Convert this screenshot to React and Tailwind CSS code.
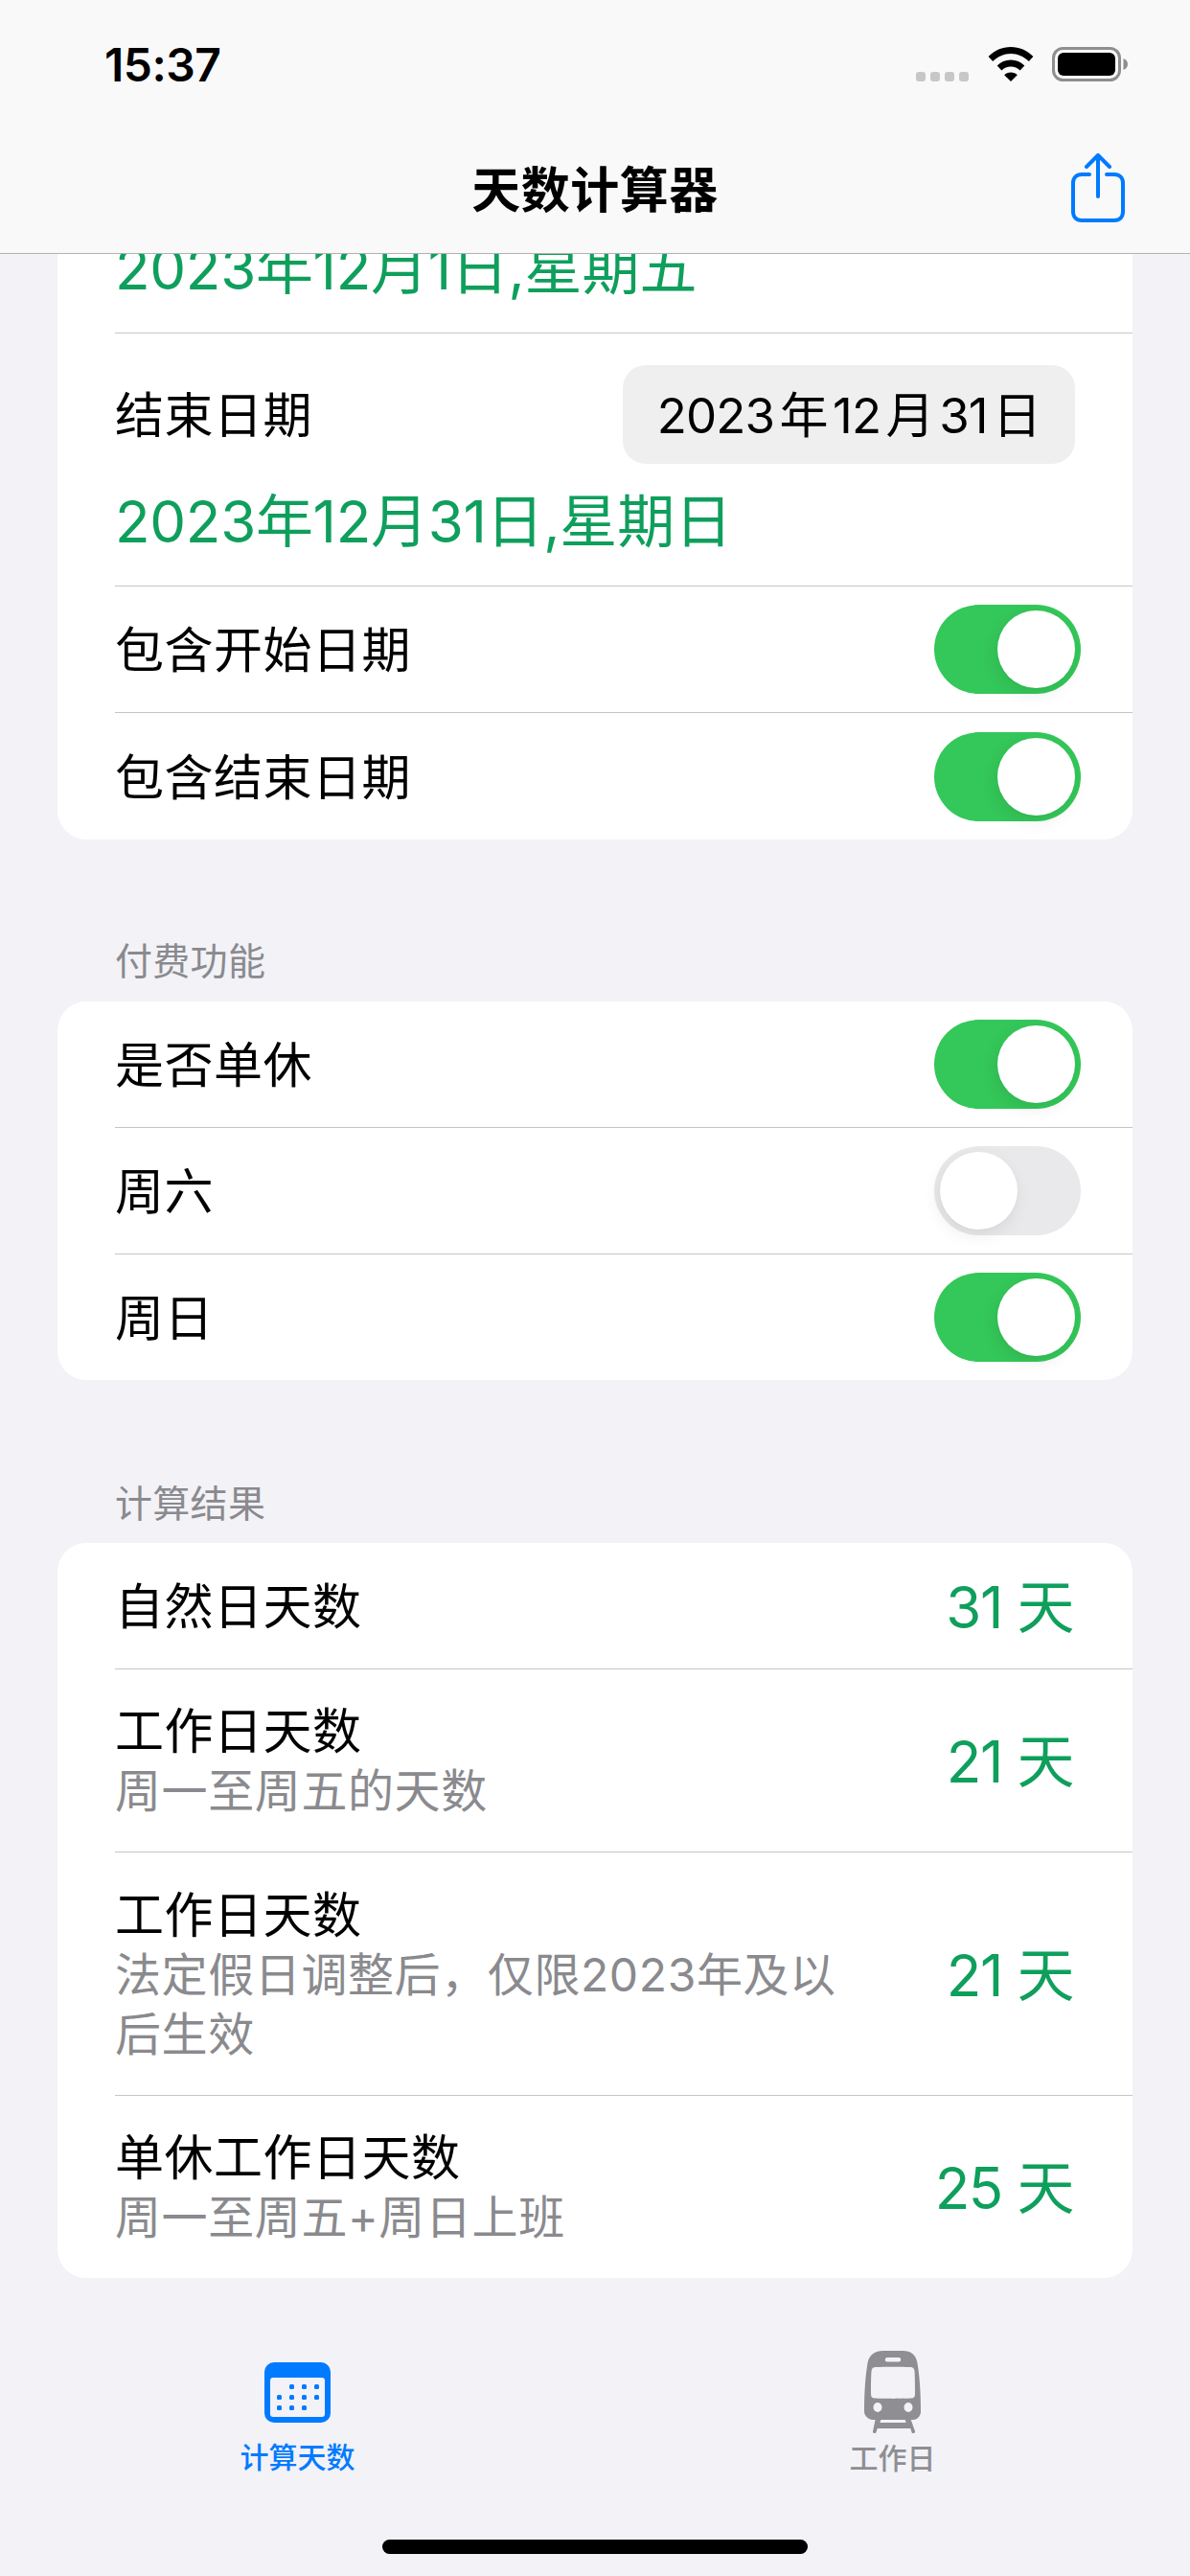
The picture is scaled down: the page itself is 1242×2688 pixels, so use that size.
const FONT = "font-['Inter','Noto_Sans_CJK_SC',sans-serif]";

function Toggle({ on = true }) {
  return (
    <div className={`flex h-[93px] w-[153px] shrink-0 items-center rounded-full p-[6px] ${on ? "justify-end bg-[#34c759]" : "justify-start bg-[#e9e9eb]"}`}>
      <div className="h-[81px] w-[81px] rounded-full bg-white shadow-[-2px_6px_18px_rgba(0,0,0,0.08),0_1px_2px_rgba(0,0,0,0.04)]" />
    </div>
  );
}

function Separator() {
  return <div className="ml-[60px] h-px bg-[#c6c6c8]" />;
}

function ToggleRow({ label, on, h = "h-[131px]" }) {
  return (
    <div className={`flex items-center justify-between pl-[60px] pr-[54px] ${h}`}>
      <span className="pt-[3px] text-[51px] leading-[60px] tracking-[0.5px] text-black">{label}</span>
      <Toggle on={on} />
    </div>
  );
}

function ResultRow({ title, sub, value, h }) {
  return (
    <div className={`flex items-center justify-between pl-[60px] pr-[62px] ${h}`}>
      <div className="flex w-[770px] flex-col pt-[2px]">
        <span className="text-[51px] leading-[62px] tracking-[0.5px] text-black">{title}</span>
        {sub && <span className="text-[48px] leading-[62px] tracking-[0.6px] text-[#8a8a8e]">{sub}</span>}
      </div>
      <span className="whitespace-nowrap pt-[2px] text-[60px] leading-[70px] tracking-[-1.4px] text-[#0f9f5c]">{value}</span>
    </div>
  );
}

function SectionLabel({ children }) {
  return <div className="pl-[60px] pt-[1px] text-[39px] leading-[46px] tracking-[0.3px] text-[#8a8a8e]">{children}</div>;
}

function Wifi() {
  return (
    <svg width="48" height="36" viewBox="0 0 48 36" className="block">
      <path d="M24 0C15 0 7 3.6 0.6 10l4.6 5C10.300 10 16.800 7 24 7s13.700 3 18.800 8l4.600-5C41 3.600 33 0 24 0z" fill="#000" />
      <path d="M24 13.500c-5.600 0-10.600 2.200-14.300 5.900l4.700 5c2.500-2.400 5.900-3.900 9.600-3.900s7.100 1.500 9.600 3.900l4.700-5C34.600 15.700 29.600 13.500 24 13.500z" fill="#000" />
      <path d="M24 26.500c-2.700 0-5 1-6.800 2.700L24 36l6.800-6.800C29 27.500 26.700 26.500 24 26.500z" fill="#000" />
    </svg>
  );
}

function Battery() {
  return (
    <svg width="80" height="36" viewBox="0 0 80 36" className="block">
      <rect x="1.500" y="1.500" width="69" height="33" rx="10" fill="none" stroke="#8e8e90" strokeWidth="3" />
      <rect x="6" y="6" width="60" height="24" rx="6" fill="#000" />
      <path d="M74.500 12c2.700 1 4.500 3.300 4.500 6s-1.800 5-4.500 6z" fill="#8e8e90" />
    </svg>
  );
}

function Share() {
  return (
    <svg width="56" height="72" viewBox="0 0 56 72" fill="none" stroke="#007aff" strokeWidth="4" strokeLinecap="round" strokeLinejoin="round" className="block">
      <path d="M19 22H11C5.500 22 2 25.500 2 31v30c0 5.500 3.500 9 9 9h34c5.500 0 9-3.500 9-9V31c0-5.500-3.500-9-9-9h-8" />
      <path d="M28 45V3" />
      <path d="M16 14L28 2l12 12" />
    </svg>
  );
}

function CalendarIcon() {
  const all = [
    [15, 0], [28, 0], [41, 0],
    [2, 11], [15, 11], [28, 11], [41, 11],
    [2, 22], [15, 22], [28, 22],
  ];
  return (
    <svg width="69" height="63" viewBox="0 0 69 63" className="block">
      <rect width="69" height="63" rx="10" fill="#007aff" />
      <rect x="6" y="16" width="57" height="41" rx="3" fill="#f2f2f7" />
      {all.map(([x, y], i) => (
        <rect key={i} x={11 + x} y={23 + y} width="5" height="5" rx="1.500" fill="#007aff" />
      ))}
    </svg>
  );
}

function TrainIcon() {
  return (
    <svg width="60" height="86" viewBox="0 0 60 86" className="block">
      <path fillRule="evenodd" fill="#8e8e93" d="M20 0h20c9 0 14 4 15.500 13 2 12 3.500 28 3.500 50 0 5-3 8-7 9H8c-4-1-8-4-8-9 0-22 1.500-38 3.500-50C5 4 11 0 20 0zM24 7a2 2 0 0 0 0 4.500h12a2 2 0 0 0 0-4.500zM12 17c-3 0-4 1.500-4.500 4-.5 6-.5 16-.500 24 0 3 1 4.500 4 4.500 6 .5 32 .5 38 0 3 0 4-1.500 4-4.500 0-8 0-18-.5-24-.5-2.500-1.500-4-4.500-4-6-.5-30-.5-36 0zM14 54a4.500 5 0 1 0 0 10 4.500 5 0 0 0 0-10zM46 54a4.500 5 0 1 0 0 10 4.500 5 0 0 0 0-10z" />
      <path fill="#8e8e93" d="M12 70h6l-1.700 5h27.400l-1.700-5h6l5 14c.5 2-2.500 3-3.500 1l-1.200-4H13.700l-1.200 4c-1 2-4 1-3.500-1z" />
    </svg>
  );
}

export default function App() {
  return (
    <div className={`flex h-[2688px] w-[1242px] flex-col overflow-hidden bg-[#f2f2f7] ${FONT}`}>
      <header className="flex h-[265px] shrink-0 flex-col border-b border-[#b2b2b2] bg-[#f9f9fa]">
        <div className="flex h-[134px] items-start justify-between pl-[109px] pr-[64px] pt-[39px]">
          <span className="text-[48px] font-semibold leading-[58px] tracking-[-0.5px] text-black">15:37</span>
          <div className="flex items-start pt-[10px]">
            <div className="mr-[20px] mt-[26px] flex gap-[5px]">
              <div className="h-[10px] w-[10px] rounded-[3px] bg-[#c7c7c9]" />
              <div className="h-[10px] w-[10px] rounded-[3px] bg-[#c7c7c9]" />
              <div className="h-[10px] w-[10px] rounded-[3px] bg-[#c7c7c9]" />
              <div className="h-[10px] w-[10px] rounded-[3px] bg-[#c7c7c9]" />
            </div>
            <Wifi />
            <div className="ml-[19px]"><Battery /></div>
          </div>
        </div>
        <div className="relative flex h-[130px] items-start justify-center pt-[33px]">
          <span className="text-[51px] font-semibold leading-[64px] tracking-[0.5px] text-black">天数计算器</span>
          <div className="absolute right-[68px] top-[26px]"><Share /></div>
        </div>
      </header>

      <main className="flex flex-1 flex-col px-[60px]">
        <section className="rounded-b-[30px] bg-white">
          <div className="h-[82px] overflow-hidden pl-[60px]">
            <div className="-mt-[15px] text-[60px] leading-[60px] text-[#0f9f5c]"><span className="tracking-[-0.3px]">2023年12月1日,</span>星期五</div>
          </div>
          <Separator />
          <div className="flex h-[263px] flex-col pl-[60px] pr-[60px] pt-[33px]">
            <div className="flex h-[103px] items-center justify-between">
              <span className="pt-[2px] text-[51px] leading-[60px] tracking-[0.5px] text-black">结束日期</span>
              <div className="flex h-[103px] w-[472px] items-center justify-center rounded-[24px] bg-[#efeff0] pt-[2px] text-[51px] leading-[60px] tracking-[-0.9px] [word-spacing:-8px] text-black">2023 年 12 月 31 日</div>
            </div>
            <div className="mt-[30px] text-[60px] leading-[60px] text-[#0f9f5c]"><span className="tracking-[-0.3px]">2023年12月31日,</span>星期日</div>
          </div>
          <Separator />
          <ToggleRow label="包含开始日期" on />
          <Separator />
          <ToggleRow label="包含结束日期" on h="h-[132px]" />
        </section>

        <div className="mt-[103px]"><SectionLabel>付费功能</SectionLabel></div>
        <section className="mt-[19px] rounded-[30px] bg-white">
          <ToggleRow label="是否单休" on />
          <Separator />
          <ToggleRow label="周六" on={false} />
          <Separator />
          <ToggleRow label="周日" on />
        </section>

        <div className="mt-[105px]"><SectionLabel>计算结果</SectionLabel></div>
        <section className="mt-[18px] rounded-[30px] bg-white">
          <ResultRow title="自然日天数" value="31 天" h="h-[131px]" />
          <Separator />
          <ResultRow title="工作日天数" sub="周一至周五的天数" value="21 天" h="h-[190px]" />
          <Separator />
          <ResultRow title="工作日天数" sub="法定假日调整后，仅限2023年及以后生效" value="21 天" h="h-[253px]" />
          <Separator />
          <ResultRow title="单休工作日天数" sub="周一至周五+周日上班" value="25 天" h="h-[190px]" />
        </section>
      </main>

      <nav className="relative flex h-[312px] shrink-0">
        <div className="flex flex-1 flex-col items-center pt-[88px]">
          <CalendarIcon />
          <span className="mt-[16px] text-[30px] font-medium leading-[40px] text-[#007aff]">计算天数</span>
        </div>
        <div className="flex flex-1 flex-col items-center pt-[76px]">
          <TrainIcon />
          <span className="mt-[6px] text-[30px] font-medium leading-[40px] text-[#8e8e93]">工作日</span>
        </div>
        <div className="absolute bottom-[24px] left-[399px] h-[15px] w-[444px] rounded-full bg-black" />
      </nav>
    </div>
  );
}
